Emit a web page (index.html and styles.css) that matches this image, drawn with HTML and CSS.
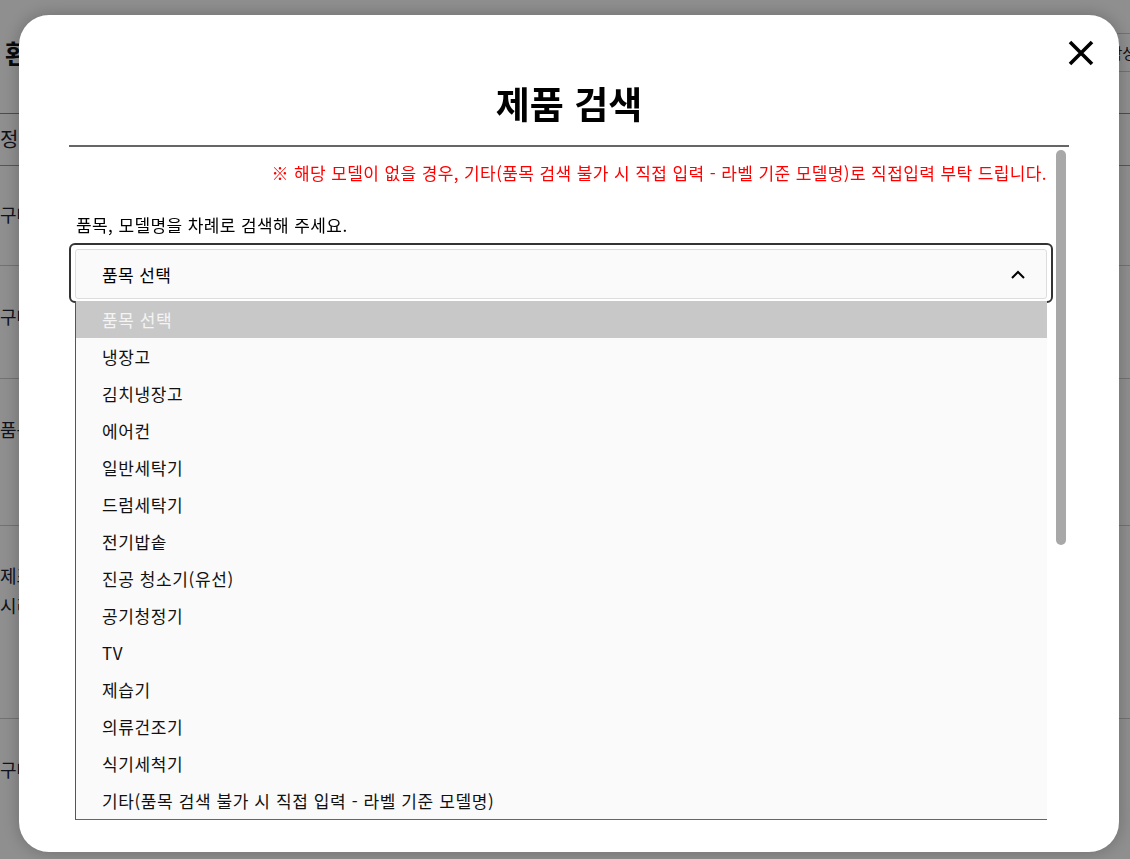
FILE: index.html
```html
<!DOCTYPE html>
<html lang="ko">
  <head>
    <meta charset="utf-8">
    <meta name="viewport" content="width=device-width, initial-scale=1">
    <title>제품 검색</title>
    <link rel="stylesheet" href="styles.css">
  </head>

  <body>
    <div class="page">
      <div class="page-head">
        <h1 class="page-title">환불 신청</h1>
        <button class="page-btn" type="button">작성</button>
      </div>
      <div class="page-table">
        <div class="row row-head">정보</div>
        <div class="row row-a">구매일자</div>
        <div class="row row-b">구매처</div>
        <div class="row row-c">품목</div>
        <div class="row row-d">제조번호<br>시리얼</div>
        <div class="row row-e">구매영수증</div>
      </div>
    </div>

    <div class="overlay"></div>

    <div class="modal">
      <button class="modal-close" type="button" aria-label="닫기">
        <svg width="26" height="26" viewBox="0 0 26 26">
          <path d="M2 2 L24 24 M24 2 L2 24" stroke="#000" stroke-width="3.6" fill="none"/>
        </svg>
      </button>
      <div class="modal-head">
        <h2 class="modal-title">제품 검색</h2>
        <hr class="modal-rule">
      </div>
      <div class="modal-body">
        <div class="modal-inner">
          <p class="notice">※ 해당 모델이 없을 경우, 기타(품목 검색 불가 시 직접 입력 - 라벨 기준 모델명)로 직접입력 부탁 드립니다.</p>
          <p class="guide">품목, 모델명을 차례로 검색해 주세요.</p>
          <div class="field">
            <div class="select">
              <span>품목 선택</span>
              <svg width="14" height="9" viewBox="0 0 14 9">
                <polyline points="1,8 7,2 13,8" stroke="#000" stroke-width="2" fill="none"/>
              </svg>
            </div>
            <ul class="options">
              <li class="option is-active">품목 선택</li>
              <li class="option">냉장고</li>
              <li class="option">김치냉장고</li>
              <li class="option">에어컨</li>
              <li class="option">일반세탁기</li>
              <li class="option">드럼세탁기</li>
              <li class="option">전기밥솥</li>
              <li class="option">진공 청소기(유선)</li>
              <li class="option">공기청정기</li>
              <li class="option">TV</li>
              <li class="option">제습기</li>
              <li class="option">의류건조기</li>
              <li class="option">식기세척기</li>
              <li class="option">기타(품목 검색 불가 시 직접 입력 - 라벨 기준 모델명)</li>
            </ul>
          </div>
        </div>
        <div class="scrollbar"><div class="scrollbar-thumb"></div></div>
      </div>
    </div>
  </body>
</html>
```

FILE: styles.css
```css
html, body {
  margin: 0;
  height: 100%;
  overflow: hidden;
}
body {
  font-family: "Noto Sans CJK KR", "Noto Sans", sans-serif;
  color: #111;
  background: #fff;
}

/* page behind the modal */
.page-head {
  height: 113px;
  box-sizing: border-box;
  padding: 33px 0 0 5px;
  display: flex;
  justify-content: space-between;
  align-items: flex-start;
}
.page-title {
  margin: 0;
  font-size: 26px;
  line-height: 39px;
  font-weight: 700;
}
.page-btn {
  height: 39px;
  margin-right: -6px;
  padding: 0 0 0 14px;
  border: 0;
  border-top: 1px solid #ccc;
  border-bottom: 1px solid #ccc;
  background: #fff;
  font-family: inherit;
  font-size: 15px;
  color: #222;
}
.page-table {
  border-top: 1px solid #888;
}
.row {
  box-sizing: border-box;
  border-bottom: 1px solid #ccc;
  font-size: 18px;
  line-height: 30px;
  color: #1a2233;
}
.row-head { height: 52px; padding-top: 10px; font-size: 20px; border-bottom-color: #999; }
.row-a { height: 100px; padding-top: 33px; }
.row-b { height: 113px; padding-top: 35px; }
.row-c { height: 147px; padding-top: 35px; }
.row-d { height: 193px; padding-top: 34px; }
.row-e { height: 150px; padding-top: 35px; }

.overlay {
  position: fixed;
  inset: 0;
  background: rgba(0, 0, 0, 0.44);
}

/* modal */
.modal {
  position: fixed;
  left: 19px;
  top: 15px;
  width: 1100px;
  height: 837px;
  box-sizing: border-box;
  padding: 0 50px;
  background: #fff;
  border-radius: 30px;
  box-shadow: 0 0 18px rgba(0, 0, 0, 0.25);
  display: flex;
  flex-direction: column;
}
.modal-close {
  position: absolute;
  top: 25px;
  right: 25px;
  width: 26px;
  height: 26px;
  padding: 0;
  border: 0;
  background: none;
}
.modal-close svg {
  display: block;
}
.modal-head {
  padding-top: 65px;
}
.modal-title {
  margin: 0;
  font-size: 37px;
  line-height: 46px;
  font-weight: 700;
  text-align: center;
  color: #000;
}
.modal-rule {
  margin: 19px 0 0;
  border: 0;
  border-top: 2px solid #666;
}
.modal-body {
  flex: 1;
  min-height: 0;
  overflow: hidden;
  display: flex;
}
.modal-inner {
  flex: 1;
  min-width: 0;
  padding-top: 16px;
}
.scrollbar {
  width: 16px;
  flex-shrink: 0;
  padding-top: 3px;
  box-sizing: border-box;
}
.scrollbar-thumb {
  width: 10px;
  height: 395px;
  margin-left: 3px;
  border-radius: 5px;
  background: #a8a8a8;
}
.notice {
  margin: 0;
  padding-right: 6px;
  font-size: 17px;
  line-height: 20px;
  letter-spacing: 0.4px;
  text-align: right;
  color: #ff0000;
}
.guide {
  margin: 32px 0 0;
  padding-left: 7px;
  font-size: 17px;
  line-height: 20px;
  letter-spacing: 0.4px;
  color: #000;
}
.field {
  position: relative;
  margin-top: 8px;
  padding: 4px 4px 2px;
  border: 2px solid #333;
  border-radius: 6px;
}
.select {
  height: 50px;
  box-sizing: border-box;
  padding: 0 21px 0 26px;
  border: 1px solid #ddd;
  border-radius: 3px;
  background: #fafafa;
  display: flex;
  justify-content: space-between;
  align-items: center;
  font-size: 17px;
  letter-spacing: 0.4px;
  color: #000;
}
.select svg {
  display: block;
}
.options {
  position: absolute;
  top: 56px;
  left: 4px;
  right: 4px;
  margin: 0;
  padding: 0;
  list-style: none;
  background: #fafafa;
  border-left: 1px solid #555;
  border-bottom: 1px solid #666;
}
.option {
  height: 37px;
  line-height: 37px;
  padding-left: 26px;
  font-size: 17px;
  letter-spacing: 0.6px;
  color: #111;
}
.option.is-active {
  background: #c8c8c8;
  color: #f4f4f4;
}
```
